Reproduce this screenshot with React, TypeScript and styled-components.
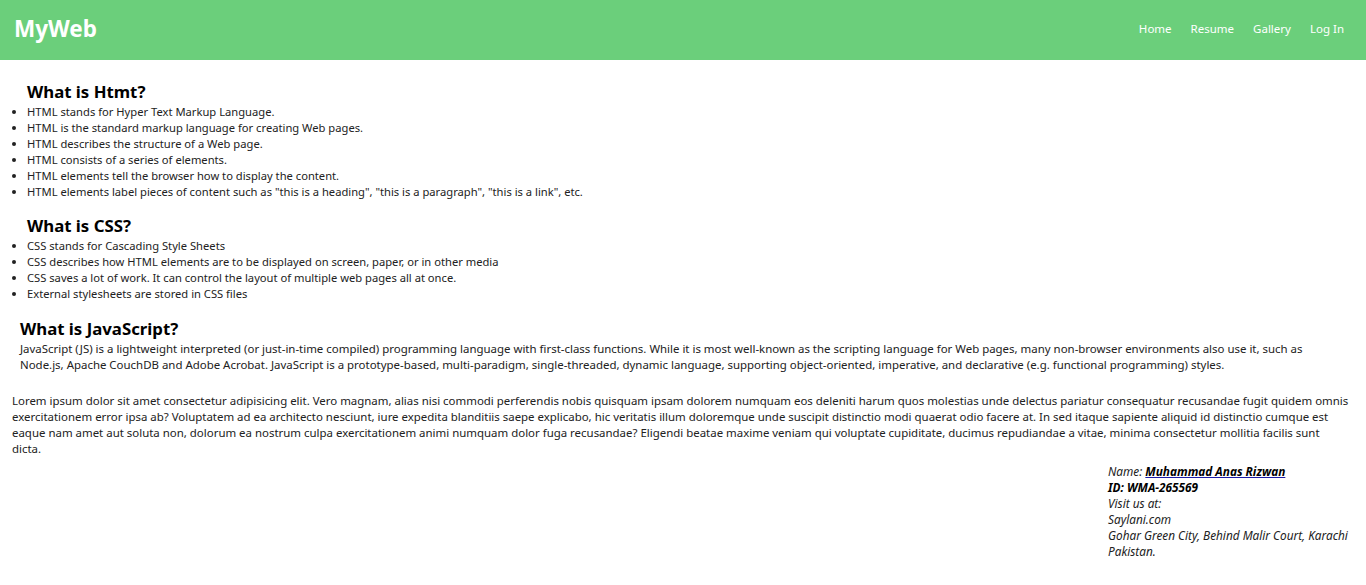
import React from "react";
import styled, { createGlobalStyle } from "styled-components";

const Global = createGlobalStyle`
  html, body { margin: 0; padding: 0; background: #fff; }
  body { font-family: "Noto Sans", "Open Sans", sans-serif; color: #222; }
  * { box-sizing: border-box; }
`;

const Nav = styled.header`
  height: 60px;
  background: #6bcf7b;
  display: flex;
  align-items: center;
  justify-content: space-between;
  padding: 0 22px 2px 14px;
`;

const Logo = styled.div`
  color: #fff;
  font-size: 22.5px;
  font-weight: 700;
  line-height: 26px;
`;

const Links = styled.nav`
  display: flex;
  gap: 19px;
`;

const NavLink = styled.a`
  color: #fff;
  font-size: 11.5px;
  line-height: 16px;
  text-decoration: none;
  cursor: pointer;
`;

const Main = styled.main`
  display: flex;
  flex-direction: column;
`;

const Section = styled.section<{ $indent: number; $top: number; $right?: number }>`
  padding-left: ${(p) => p.$indent}px;
  padding-right: ${(p) => p.$right ?? 20}px;
  margin-top: ${(p) => p.$top}px;
`;

const Heading = styled.h3`
  margin: 0;
  padding-bottom: 1px;
  font-size: 16.8px;
  font-weight: 700;
  color: #000;
  line-height: 22px;
`;

const List = styled.ul`
  margin: 0;
  padding-left: 0;
  list-style: disc;
  font-size: 11.2px;
  line-height: 16px;
`;

const Text = styled.p`
  margin: 0;
  font-size: 11.45px;
  line-height: 16px;
`;

const Footer = styled.footer`
  align-self: flex-end;
  width: 258px;
  margin-top: 6px;
  font-style: italic;
  font-size: 11.8px;
  line-height: 16px;
  color: #222;
`;

const Line = styled.div<{ $bold?: boolean }>`
  font-weight: ${(p) => (p.$bold ? 700 : 400)};
  color: ${(p) => (p.$bold ? "#000" : "inherit")};
`;

const NameLink = styled.a`
  font-weight: 700;
  color: #000;
  text-decoration: underline;
  text-decoration-color: #1a1aa6;
`;

export default function App() {
  return (
    <>
      <Global />
      <Nav>
        <Logo>MyWeb</Logo>
        <Links>
          <NavLink>Home</NavLink>
          <NavLink>Resume</NavLink>
          <NavLink>Gallery</NavLink>
          <NavLink>Log In</NavLink>
        </Links>
      </Nav>
      <Main>
        <Section $indent={27} $top={21}>
          <Heading>What is Htmt?</Heading>
          <List>
            <li>HTML stands for Hyper Text Markup Language.</li>
            <li>HTML is the standard markup language for creating Web pages.</li>
            <li>HTML describes the structure of a Web page.</li>
            <li>HTML consists of a series of elements.</li>
            <li>HTML elements tell the browser how to display the content.</li>
            <li>HTML elements label pieces of content such as "this is a heading", "this is a paragraph", "this is a link", etc.</li>
          </List>
        </Section>
        <Section $indent={27} $top={15}>
          <Heading>What is CSS?</Heading>
          <List>
            <li>CSS stands for Cascading Style Sheets</li>
            <li>CSS describes how HTML elements are to be displayed on screen, paper, or in other media</li>
            <li>CSS saves a lot of work. It can control the layout of multiple web pages all at once.</li>
            <li>External stylesheets are stored in CSS files</li>
          </List>
        </Section>
        <Section $indent={20} $top={16} $right={20}>
          <Heading>What is JavaScript?</Heading>
          <Text>
            JavaScript (JS) is a lightweight interpreted (or just-in-time compiled) programming language with first-class functions. While it is most well-known as the scripting language for Web pages, many non-browser environments also use it, such as Node.js, Apache CouchDB and Adobe Acrobat. JavaScript is a prototype-based, multi-paradigm, single-threaded, dynamic language, supporting object-oriented, imperative, and declarative (e.g. functional programming) styles.
          </Text>
        </Section>
        <Section $indent={12} $top={20} $right={16}>
          <Text>
            Lorem ipsum dolor sit amet consectetur adipisicing elit. Vero magnam, alias nisi commodi perferendis nobis quisquam ipsam dolorem numquam eos deleniti harum quos molestias unde delectus pariatur consequatur recusandae fugit quidem omnis exercitationem error ipsa ab? Voluptatem ad ea architecto nesciunt, iure expedita blanditiis saepe explicabo, hic veritatis illum doloremque unde suscipit distinctio modi quaerat odio facere at. In sed itaque sapiente aliquid id distinctio cumque est eaque nam amet aut soluta non, dolorum ea nostrum culpa exercitationem animi numquam dolor fuga recusandae? Eligendi beatae maxime veniam qui voluptate cupiditate, ducimus repudiandae a vitae, minima consectetur mollitia facilis sunt dicta.
          </Text>
        </Section>
        <Footer>
          <Line>Name: <NameLink>Muhammad Anas Rizwan</NameLink></Line>
          <Line $bold>ID: WMA-265569</Line>
          <Line>Visit us at:</Line>
          <Line>Saylani.com</Line>
          <Line>Gohar Green City, Behind Malir Court, Karachi Pakistan.</Line>
        </Footer>
      </Main>
    </>
  );
}
